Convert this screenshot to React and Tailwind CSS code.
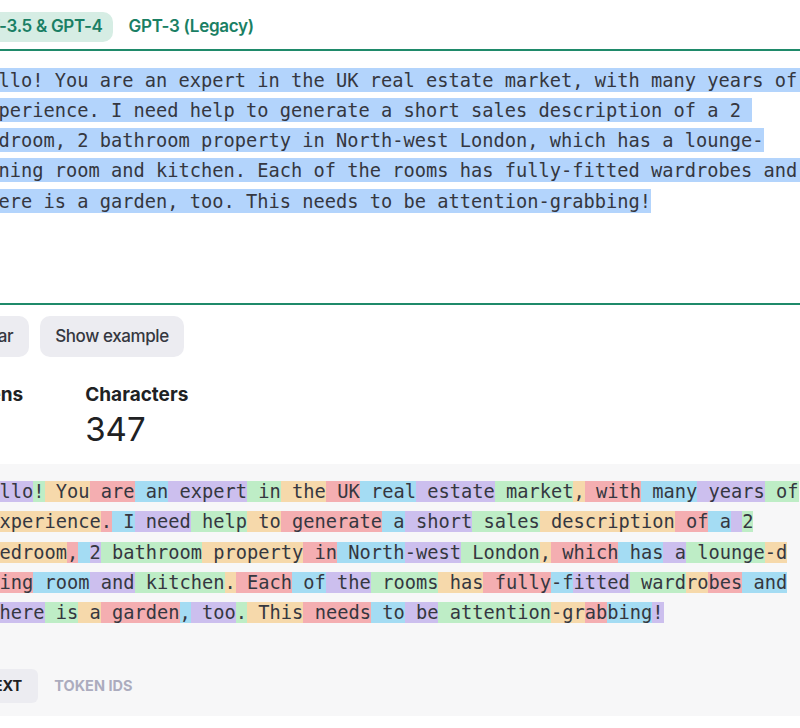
import React from 'react'

const tokenColors = [
  'bg-[rgba(107,64,216,0.3)]',
  'bg-[rgba(104,222,122,0.4)]',
  'bg-[rgba(244,172,54,0.4)]',
  'bg-[rgba(239,65,70,0.4)]',
  'bg-[rgba(39,181,234,0.4)]',
]

const tokenLines = [
  ['Hello', '!', ' You', ' are', ' an', ' expert', ' in', ' the', ' UK', ' real', ' estate', ' market', ',', ' with', ' many', ' years', ' of'],
  [' experience', '.', ' I', ' need', ' help', ' to', ' generate', ' a', ' short', ' sales', ' description', ' of', ' a', ' ', '2'],
  [' bedroom', ',', ' ', '2', ' bathroom', ' property', ' in', ' North', '-west', ' London', ',', ' which', ' has', ' a', ' lounge', '-d'],
  ['ining', ' room', ' and', ' kitchen', '.', ' Each', ' of', ' the', ' rooms', ' has', ' fully', '-f', 'itted', ' ward', 'ro', 'bes', ' and'],
  [' there', ' is', ' a', ' garden', ',', ' too', '.', ' This', ' needs', ' to', ' be', ' attention', '-gr', 'ab', 'bing', '!'],
]

const inputLines = [
  'Hello! You are an expert in the UK real estate market, with many years of ',
  'experience. I need help to generate a short sales description of a 2 ',
  'bedroom, 2 bathroom property in North-west London, which has a lounge-',
  'dining room and kitchen. Each of the rooms has fully-fitted wardrobes and ',
  'there is a garden, too. This needs to be attention-grabbing!',
]

const mono = { fontFamily: '"DejaVu Sans Mono", "Liberation Mono", monospace' }

const App = () => {
  let n = 0
  return (
    <div className="w-[800px] h-[728px] overflow-hidden bg-white font-['Inter',sans-serif] text-[#202123]">
      <div className="-ml-[44px] w-[900px] pt-[12px]">
        <div className="flex gap-[6px] h-[30px]">
          <button className="h-[30px] px-[10px] rounded-[10px] bg-[#d6ede4] text-[#1a7f64] text-[17px] tracking-[-0.3px] font-semibold">
            GPT-3.5 &amp; GPT-4
          </button>
          <button className="h-[30px] px-[10px] rounded-[10px] text-[#1a7f64] text-[17px] tracking-[-0.3px] font-semibold">
            GPT-3 (Legacy)
          </button>
        </div>

        <div
          className="mt-[7px] h-[256px] border-2 border-[#1f8a6a] pl-[18px] pt-[14px] text-[18.7px] leading-[30.25px] text-[#353740] whitespace-pre"
          style={mono}
        >
          {inputLines.map((line, i) => (
            <div key={i}>
              <span className="bg-[#b3d4fc] py-[1.5px]">{line}</span>
            </div>
          ))}
        </div>

        <div className="mt-[11px] flex gap-[11px]">
          <button className="h-[41px] px-4 rounded-[10px] bg-[#ececf1] text-[17px] tracking-[-0.4px] font-medium text-[#353740]">Clear</button>
          <button className="h-[41px] px-[15px] rounded-[10px] bg-[#ececf1] text-[17px] tracking-[-0.4px] font-medium text-[#353740]">Show example</button>
        </div>

        <div className="mt-[26px] flex gap-[62px]">
          <div>
            <div className="text-[19px] leading-[24px] font-bold">Tokens</div>
            <div className="mt-[2px] text-[33px] leading-[40px]">78</div>
          </div>
          <div>
            <div className="text-[19px] leading-[24px] font-bold">Characters</div>
            <div className="mt-[2px] text-[33px] leading-[40px]">347</div>
          </div>
        </div>

        <div className="mt-[15px] bg-[#f7f7f8] pt-[13px] pb-[13px]">
          <div className="pl-[21px] text-[18.7px] leading-[30.25px] text-[#353740] whitespace-pre" style={mono}>
            {tokenLines.map((line, i) => (
              <div key={i}>
                {line.map((tok, j) => {
                  const c = tokenColors[n++ % 5]
                  return (
                    <span key={j} className={c}>
                      {tok}
                    </span>
                  )
                })}
              </div>
            ))}
          </div>
          <div className="mt-[41px] pl-[12px] flex">
            <button className="h-[34px] px-4 rounded-md bg-[#ececf1] text-[14.5px] font-bold text-[#202123]">TEXT</button>
            <button className="h-[34px] px-4 rounded-md text-[14.5px] font-bold text-[#acacbe]">TOKEN IDS</button>
          </div>
        </div>
      </div>
    </div>
  )
}

export default App
